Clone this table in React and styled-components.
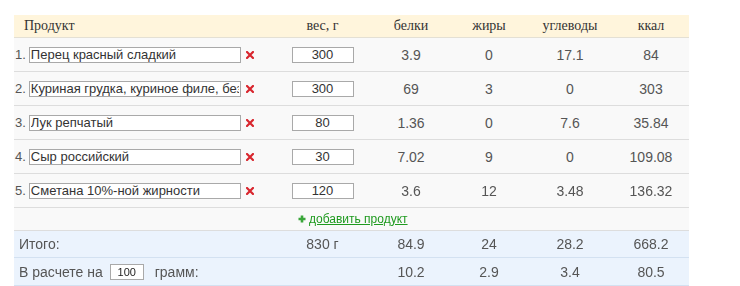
import React from 'react';
import styled, { createGlobalStyle } from 'styled-components';

const products = [
  { name: 'Перец красный сладкий', weight: '300', p: '3.9', f: '0', c: '17.1', kcal: '84' },
  { name: 'Куриная грудка, куриное филе, без кожи', weight: '300', p: '69', f: '3', c: '0', kcal: '303' },
  { name: 'Лук репчатый', weight: '80', p: '1.36', f: '0', c: '7.6', kcal: '35.84' },
  { name: 'Сыр российский', weight: '30', p: '7.02', f: '9', c: '0', kcal: '109.08' },
  { name: 'Сметана 10%-ной жирности', weight: '120', p: '3.6', f: '12', c: '3.48', kcal: '136.32' },
];

const Global = createGlobalStyle`
  body {
    margin: 0;
    background: #fff;
    font-family: "Liberation Sans", Arial, sans-serif;
  }
`;

const Page = styled.div`
  padding: 15px 0 0 14px;
`;

const Table = styled.div`
  width: 675px;
`;

const Row = styled.div`
  display: grid;
  grid-template-columns: 260px 97px 80px 76px 86px 76px;
  align-items: center;
  height: ${(p) => p.h}px;
  background: ${(p) => p.bg || '#f9f9f9'};
  border-bottom: 1px solid ${(p) => p.line || '#dddddd'};
  box-sizing: border-box;
`;

const HeadCell = styled.div`
  font-family: "Liberation Serif", "Times New Roman", serif;
  font-size: 14px;
  color: #333;
  text-align: ${(p) => (p.left ? 'left' : 'center')};
  padding-left: ${(p) => (p.left ? '10px' : '0')};
`;

const Cell = styled.div`
  font-size: 14px;
  color: #555;
  text-align: center;
`;

const NameCell = styled.div`
  display: flex;
  align-items: center;
  font-size: 13px;
  color: #555;
  padding-left: 1px;
`;

const NameInput = styled.input`
  flex-shrink: 0;
  box-sizing: border-box;
  width: 212px;
  height: 16px;
  margin-left: 3px;
  padding: 0 1px;
  border: 1px solid #a9a9a9;
  font-family: "Liberation Sans", Arial, sans-serif;
  font-size: 13px;
  color: #333;
  background: #fff;
  outline: none;
`;

const Remove = styled.span`
  display: inline-flex;
  margin-left: 5px;
`;

const WeightCell = styled.div`
  display: flex;
  justify-content: center;
`;

const WeightInput = styled.input`
  box-sizing: border-box;
  width: 62px;
  height: 16px;
  padding: 0;
  border: 1px solid #a9a9a9;
  font-family: "Liberation Sans", Arial, sans-serif;
  font-size: 13px;
  color: #333;
  text-align: center;
  background: #fff;
  outline: none;
  caret-color: #000;
`;

const AddRow = styled.div`
  height: 23px;
  background: #f9f9f9;
  border-bottom: 1px solid #dddddd;
  box-sizing: border-box;
  display: flex;
  align-items: center;
  padding-left: 284px;
`;

const AddLink = styled.a`
  display: inline-flex;
  align-items: center;
  gap: 3px;
  font-size: 12px;
  color: #1f9a1f;
  text-decoration: underline;
  cursor: pointer;
`;

const TotalLabel = styled.div`
  font-size: 14px;
  color: #555;
  padding-left: 5px;
  display: flex;
  align-items: center;
  gap: 5px;
`;

const PerInput = styled.input`
  box-sizing: border-box;
  width: 34px;
  height: 16px;
  margin: 0 6px 0 2px;
  padding: 0;
  border: 1px solid #a9a9a9;
  font-family: "Liberation Sans", Arial, sans-serif;
  font-size: 11px;
  color: #222;
  text-align: center;
  background: #fff;
`;

const Cross = () => (
  <svg width="8" height="8" viewBox="0 0 8 8">
    <path d="M1 1 L7 7 M7 1 L1 7" stroke="#d8262e" strokeWidth="2.2" strokeLinecap="square" />
  </svg>
);

const Plus = () => (
  <svg width="8" height="8" viewBox="0 0 8 8">
    <path d="M4 0.5 V7.5 M0.5 4 H7.5" stroke="#3aa63a" strokeWidth="2.6" />
  </svg>
);

export default function App() {
  return (
    <Page>
      <Global />
      <Table>
        <Row h={23} bg="#fff5dc" line="#e4e0d4">
          <HeadCell left>Продукт</HeadCell>
          <HeadCell>вес, г</HeadCell>
          <HeadCell>белки</HeadCell>
          <HeadCell>жиры</HeadCell>
          <HeadCell>углеводы</HeadCell>
          <HeadCell>ккал</HeadCell>
        </Row>
        {products.map((item, i) => (
          <Row h={34} key={i}>
            <NameCell>
              {i + 1}.
              <NameInput defaultValue={item.name} />
              <Remove><Cross /></Remove>
            </NameCell>
            <WeightCell>
              <WeightInput defaultValue={item.weight} autoFocus={i === products.length - 1} />
            </WeightCell>
            <Cell>{item.p}</Cell>
            <Cell>{item.f}</Cell>
            <Cell>{item.c}</Cell>
            <Cell>{item.kcal}</Cell>
          </Row>
        ))}
        <AddRow>
          <AddLink><Plus />добавить продукт</AddLink>
        </AddRow>
        <Row h={27} bg="#ebf3fd" line="#d3e1f1">
          <TotalLabel>Итого:</TotalLabel>
          <Cell>830 г</Cell>
          <Cell>84.9</Cell>
          <Cell>24</Cell>
          <Cell>28.2</Cell>
          <Cell>668.2</Cell>
        </Row>
        <Row h={28} bg="#ebf3fd" line="#d3e1f1">
          <TotalLabel>
            В расчете на<PerInput defaultValue="100" />грамм:
          </TotalLabel>
          <div />
          <Cell>10.2</Cell>
          <Cell>2.9</Cell>
          <Cell>3.4</Cell>
          <Cell>80.5</Cell>
        </Row>
      </Table>
    </Page>
  );
}
